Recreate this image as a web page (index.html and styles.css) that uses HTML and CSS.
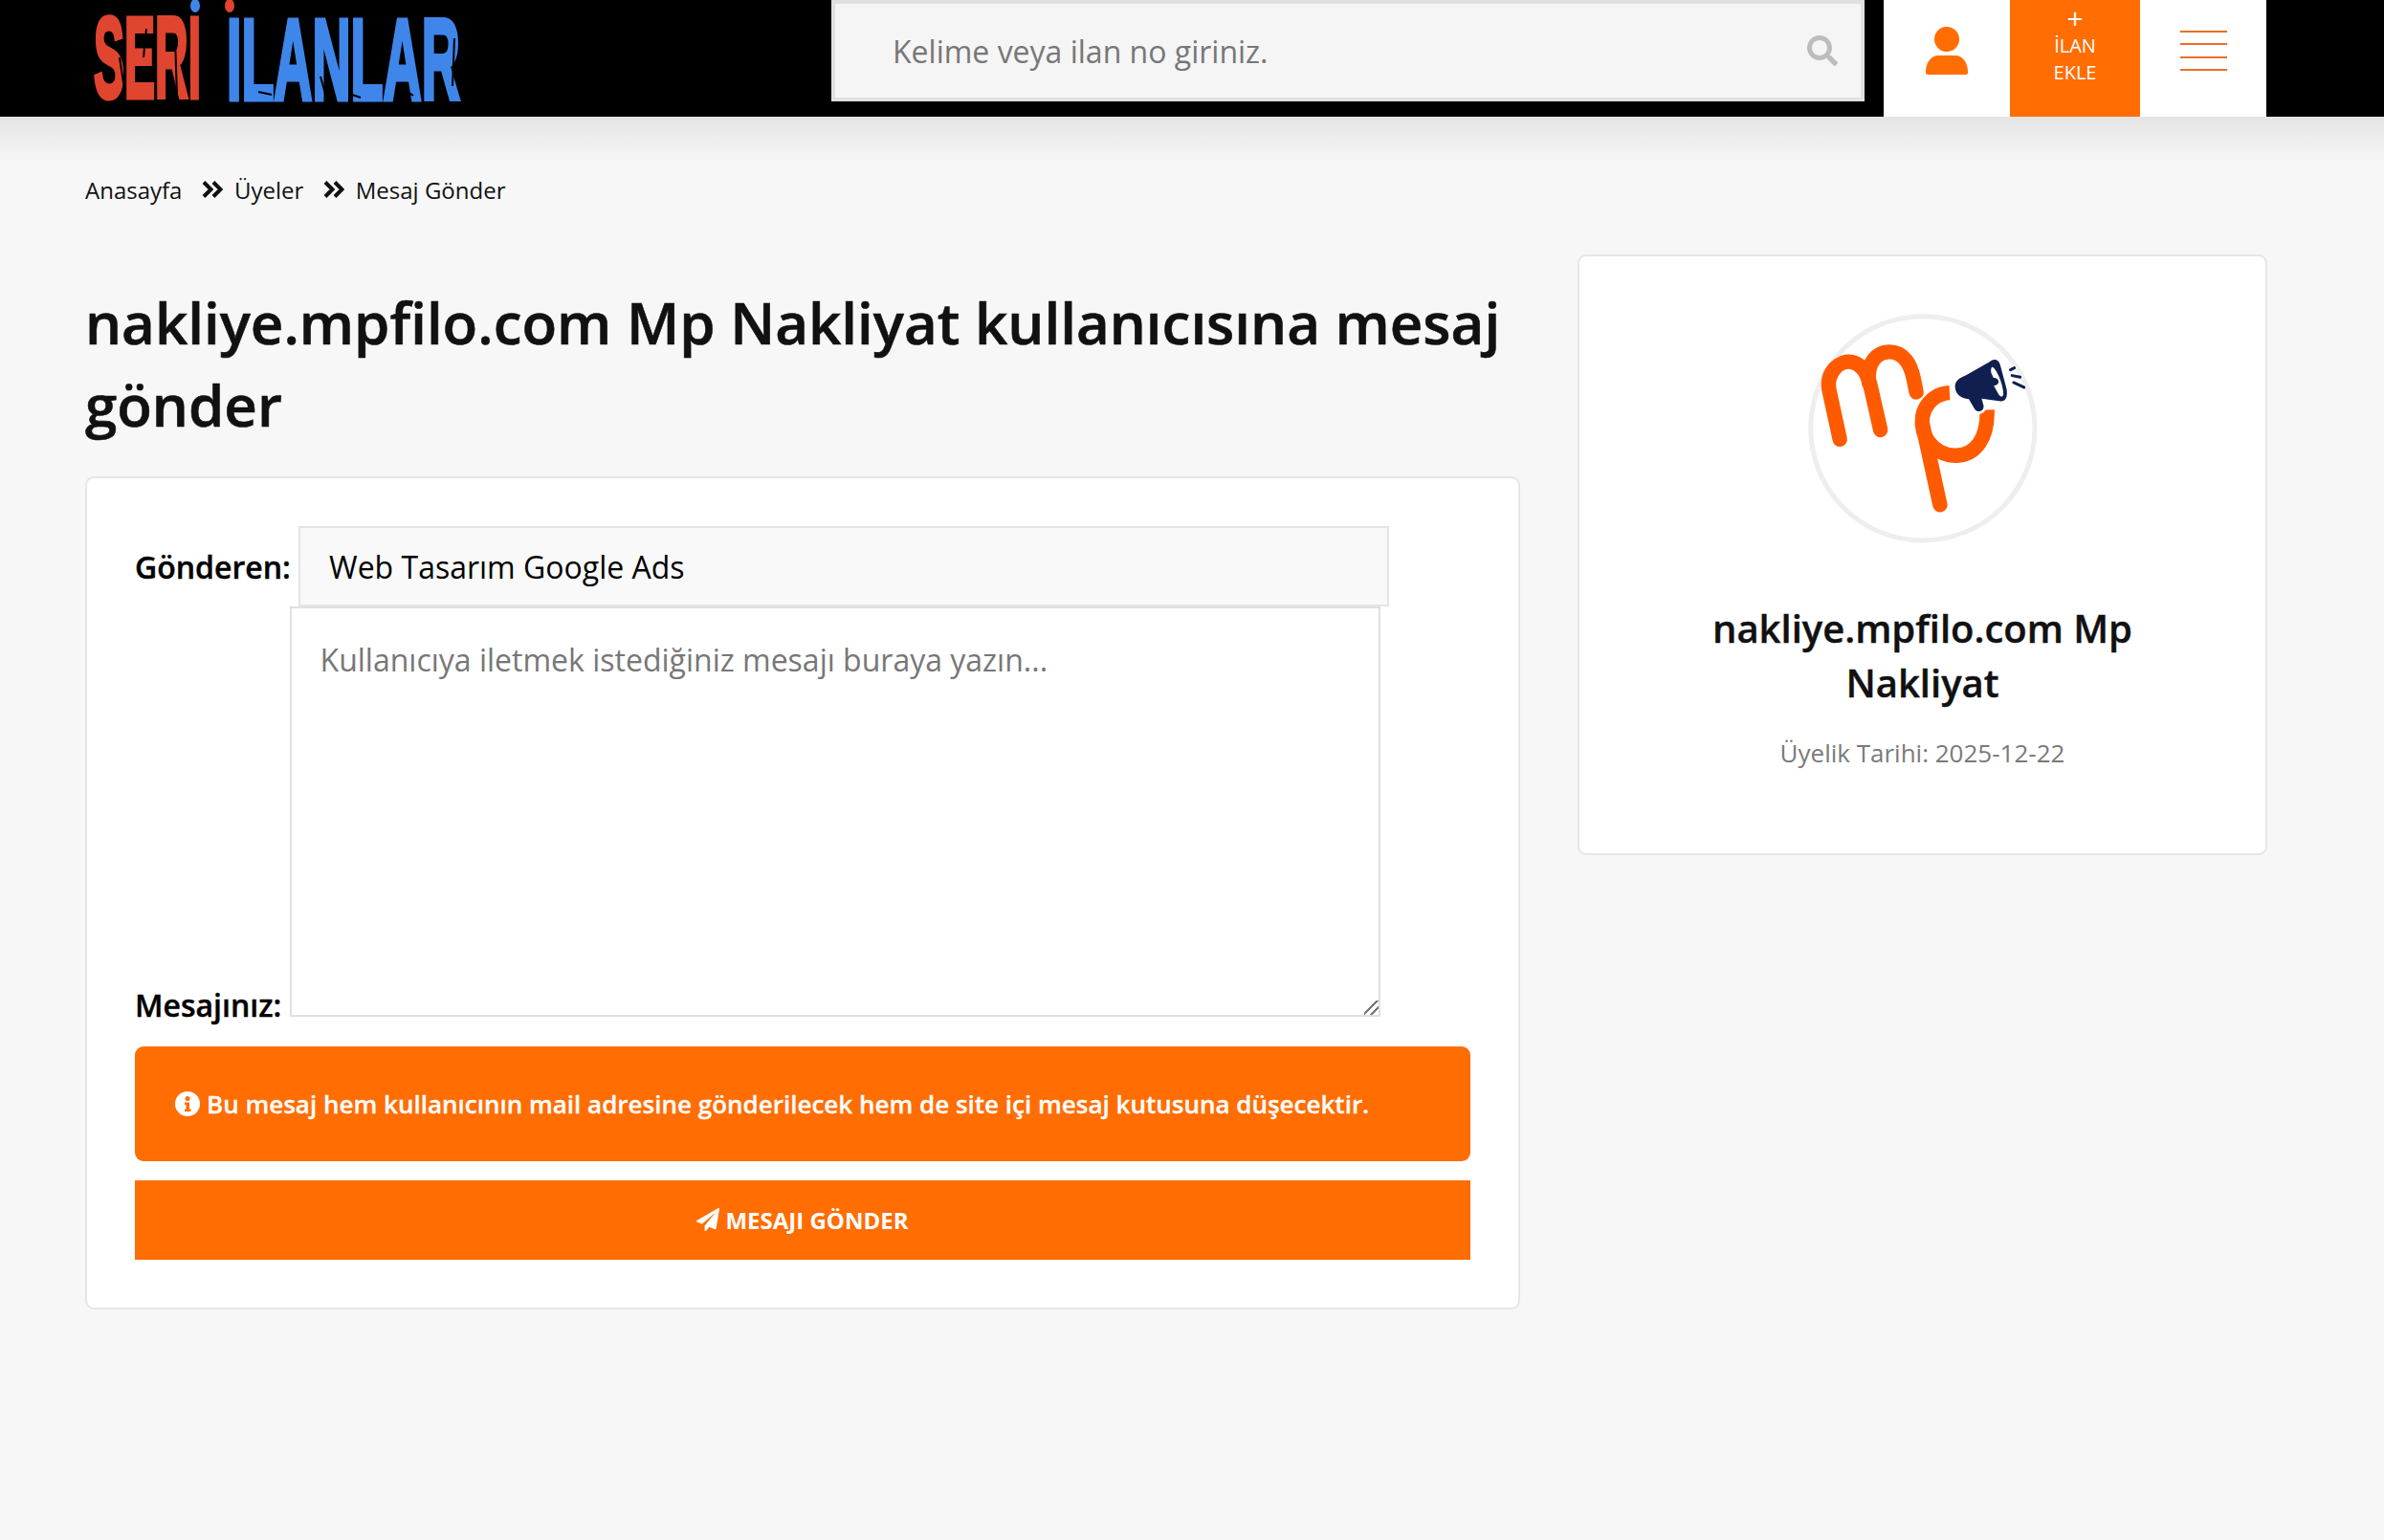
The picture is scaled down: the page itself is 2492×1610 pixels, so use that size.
FILE: index.html
```html
<!DOCTYPE html>
<html lang="tr">
<head>
    <meta charset="UTF-8">
    <title>Mesaj Gönder - Seri İlanlar</title>
    <link rel="stylesheet" href="styles.css">
</head>
<body>
<header class="topbar">
    <a class="logo" href="#" aria-label="Seri İlanlar">
        <svg width="400" height="122" viewBox="0 0 400 122">
            <text class="logo-red" transform="translate(3 102) scale(.4 1)">SERI</text>
            <text class="logo-blue" transform="translate(142 104) scale(.463 1)">ILANLAR</text>
            <ellipse cx="109" cy="6" rx="5" ry="7" fill="#3f86ea"/>
            <ellipse cx="145" cy="6" rx="5" ry="7" fill="#e0452f"/>
            <path class="logo-scratch" d="M30 60l6 40M58 30l-3 30M175 96l14 3M270 98l12 4M325 92l12 8M380 40l-2 50M240 80l5 18M88 40l2 60"/>
        </svg>
    </a>
    <form class="search">
        <input type="text" placeholder="Kelime veya ilan no giriniz.">
        <svg class="search-icon" width="32" height="32" viewBox="0 0 512 512">
            <path d="M505 442.7L405.3 343c-4.500-4.500-10.600-7-17-7H372c27.600-35.300 44-79.700 44-128C416 93.100 322.900 0 208 0S0 93.100 0 208s93.100 208 208 208c48.300 0 92.700-16.400 128-44v16.300c0 6.400 2.500 12.500 7 17l99.700 99.700c9.400 9.400 24.600 9.400 33.900 0l28.300-28.300c9.400-9.400 9.400-24.600.100-34zM208 336c-70.700 0-128-57.200-128-128 0-70.700 57.200-128 128-128 70.700 0 128 57.200 128 128 0 70.700-57.200 128-128 128z"/>
        </svg>
    </form>
    <nav class="actions">
        <a class="action" href="#">
            <svg width="44" height="50" viewBox="0 0 44 50">
                <circle cx="22" cy="13" r="13"/>
                <path d="M13 30h18c7 0 13 7 13 17v1c0 1-1 2-2 2H2c-1 0-2-1-2-2v-1c0-10 6-17 13-17z"/>
            </svg>
        </a>
        <a class="action action-add" href="#">
            <span class="plus">+</span>
            <span>İLAN</span>
            <span>EKLE</span>
        </a>
        <a class="action" href="#">
            <span class="burger"><i></i><i></i><i></i><i></i></span>
        </a>
    </nav>
</header>

<div class="page">
    <div class="breadcrumb">
        <a href="#">Anasayfa</a>
        <svg class="crumb-sep" width="22" height="18" viewBox="0 0 22 18"><path d="M2 1.500l7.500 7.500-7.500 7.500M12 1.500l7.500 7.500-7.500 7.500"/></svg>
        <a href="#">Üyeler</a>
        <svg class="crumb-sep" width="22" height="18" viewBox="0 0 22 18"><path d="M2 1.500l7.500 7.500-7.500 7.500M12 1.500l7.500 7.500-7.500 7.500"/></svg>
        <a href="#">Mesaj Gönder</a>
    </div>

    <div class="columns">
        <main class="main-col">
            <h1>nakliye.mpfilo.com Mp Nakliyat kullanıcısına mesaj gönder</h1>
            <form class="card message-form">
                <label>Gönderen:</label>
                <input type="text" class="sender" value="Web Tasarım Google Ads">
                <label>Mesajınız:</label>
                <textarea placeholder="Kullanıcıya iletmek istediğiniz mesajı buraya yazın..."></textarea>
                <div class="notice">
                    <svg width="26" height="26" viewBox="0 0 26 26">
                        <circle cx="13" cy="13" r="13" fill="#fff"/>
                        <circle cx="13" cy="7.500" r="2.500" fill="#ff6d03"/>
                        <path d="M10 11.500h5v7h1.500v2.500h-6.500v-2.500h1.500v-4.500h-1.500z" fill="#ff6d03"/>
                    </svg>
                    <span>Bu mesaj hem kullanıcının mail adresine gönderilecek hem de site içi mesaj kutusuna düşecektir.</span>
                </div>
                <button type="submit" class="send-btn">
                    <svg width="24" height="24" viewBox="0 0 1792 1792">
                        <path d="M1764 11q33 24 27 64l-256 1536q-5 29-32 45-14 8-31 8-11 0-24-5l-453-185-242 295q-18 23-49 23-13 0-22-4-19-7-30.500-23.500t-11.500-36.500v-349l864-1059-1069 925-395-162q-37-14-40-55-2-40 32-59l1664-960q15-9 32-9 20 0 36 11z"/>
                    </svg>
                    MESAJI GÖNDER
                </button>
            </form>
        </main>

        <aside class="card profile">
            <svg class="avatar" width="240" height="240" viewBox="148 85 717 717">
                <circle cx="506" cy="443" r="350" fill="#fff" stroke="#eee" stroke-width="15"/>
                <g fill="none" stroke="#ff5a00" stroke-width="46" stroke-linecap="round">
                    <path d="M247 477L213 320C205 265 250 228 285 236C320 244 335 275 345 320L374 448"/>
                    <path d="M338 300C330 235 365 205 400 204C445 203 468 240 478 290L486 330"/>
                    <path d="M505 430L560 682"/>
                </g>
                <path fill="none" stroke="#ff5a00" stroke-width="46" d="M590 332C535 335 500 380 505 432C510 490 560 530 612 528C670 526 710 475 707 385"/>
                <path fill="#0f1f50" stroke="#fff" stroke-width="16" paint-order="stroke" stroke-linejoin="round" d="M640 278L715 235C728 225 742 226 748 245L768 320C772 345 765 358 750 358L690 350L696 372C698 392 676 395 668 382L650 352C625 350 606 335 607 310C608 295 622 285 640 278z"/>
                <path fill="#fff" d="M725 252C740 262 758 310 758 335C756 348 748 345 742 335L728 310C748 308 748 285 727 285L720 270C718 258 720 250 725 252z"/>
                <path fill="none" stroke="#0f1f50" stroke-width="9" stroke-linecap="round" d="M780 260l12-6M785 278l25 5M790 300l32 15"/>
            </svg>
            <h2>nakliye.mpfilo.com Mp Nakliyat</h2>
            <p>Üyelik Tarihi: 2025-12-22</p>
        </aside>
    </div>
</div>
</body>
</html>
```
FILE: styles.css
```css
* {
    box-sizing: border-box;
}

body {
    margin: 0;
    min-height: 1610px;
    font-family: "Open Sans", sans-serif;
    color: #111;
    background: linear-gradient(#e4e4e4, #f7f7f7 48px) 0 122px no-repeat;
    background-color: #f7f7f7;
}

a {
    color: inherit;
    text-decoration: none;
}

/* header */
.topbar {
    display: flex;
    height: 122px;
    padding: 0 122px 0 95px;
    background: #000;
}

.logo {
    width: 774px;
    height: 122px;
}

.logo svg {
    display: block;
}

.logo text {
    font-family: "Liberation Sans", sans-serif;
    font-weight: 700;
    font-size: 120px;
    stroke-width: 5;
}

.logo-red {
    fill: #e0452f;
    stroke: #e0452f;
}

.logo-blue {
    fill: #3f86ea;
    stroke: #3f86ea;
}

.logo-scratch {
    fill: none;
    stroke: #000;
    stroke-width: 2;
}

.search {
    display: flex;
    align-items: center;
    width: 1080px;
    height: 106px;
    padding: 0 24px 0 58px;
    background: #f5f5f5;
    border: 4px solid #e0e0e0;
}

.search input {
    flex: 1;
    border: none;
    outline: none;
    background: none;
    font: 32px "Open Sans", sans-serif;
}

.search input::placeholder {
    color: #777;
    opacity: 1;
}

.search-icon {
    fill: #bdbdbd;
}

.actions {
    display: flex;
    margin-left: 20px;
    background: #fff;
}

.action {
    display: flex;
    flex-direction: column;
    align-items: center;
    justify-content: center;
    width: 132px;
    padding-bottom: 16px;
    color: #ff6d03;
}

.action svg {
    fill: #ff6d03;
}

.action-add {
    width: 136px;
    padding-bottom: 28px;
    background: #ff6d03;
    color: #fff;
    font-size: 20px;
    line-height: 28px;
}

.plus {
    font-size: 30px;
    line-height: 30px;
}

.burger {
    display: flex;
    flex-direction: column;
    gap: 11.300px;
    width: 49px;
}

.burger i {
    height: 2px;
    background: #e8702a;
}

/* page */
.page {
    padding: 0 122px 0 89px;
}

.breadcrumb {
    display: flex;
    align-items: center;
    height: 98px;
    padding-top: 54px;
    font-size: 24px;
    color: #111;
}

.crumb-sep {
    margin: 0 11.500px 0 21px;
    fill: none;
    stroke: #111;
    stroke-width: 4;
}

.columns {
    display: flex;
    justify-content: space-between;
    align-items: flex-start;
    margin-top: 46px;
}

.main-col {
    width: 1500px;
}

h1 {
    margin: 28px 0 32px;
    font-size: 60px;
    font-weight: 600;
    line-height: 86px;
    color: #111;
    -webkit-text-stroke: 0.6px #111;
}

.card {
    background: #fff;
    border: 2px solid #e6e6e6;
    border-radius: 9px;
}

/* message form */
.message-form {
    padding: 50px;
    font-size: 32px;
    line-height: 42px;
}

.message-form label {
    font-weight: 600;
    color: #000;
    -webkit-text-stroke: 0.4px #000;
}

.sender {
    width: 1140px;
    height: 84px;
    padding: 0 30px;
    background: #f9f9f9;
    border: 2px solid #e4e4e4;
    font: 32px "Open Sans", sans-serif;
    color: #000;
    outline: none;
}

textarea {
    width: 1140px;
    height: 429px;
    padding: 30px 30px;
    border: 2px solid #e0e0e0;
    background: #fff;
    font: 32px/1.5 "Open Sans", sans-serif;
    outline: none;
}

textarea::placeholder {
    color: #777;
    opacity: 1;
}

textarea::-webkit-resizer {
    background: linear-gradient(135deg, transparent 42%, #777 42%, #777 52%, transparent 52%, transparent 68%, #777 68%, #777 78%, transparent 78%);
}

.notice {
    display: flex;
    align-items: center;
    gap: 7px;
    height: 120px;
    margin-top: 22px;
    padding: 0 42px;
    background: #ff6d03;
    border-radius: 9px;
    color: #fff;
    font-size: 26px;
    font-weight: 600;
    -webkit-text-stroke: 0.3px #fff;
}

.send-btn {
    display: flex;
    align-items: center;
    justify-content: center;
    gap: 6px;
    width: 100%;
    height: 83px;
    margin-top: 20px;
    padding-bottom: 2px;
    border: none;
    background: #ff6d03;
    color: #fff;
    font: 700 24px "Open Sans", sans-serif;
    cursor: pointer;
}

.send-btn svg {
    fill: #fff;
}

/* profile card */
.profile {
    width: 721px;
    height: 628px;
    padding: 60px 60px 0;
    text-align: center;
}

.avatar {
    display: block;
    margin: 0 auto;
}

.profile h2 {
    margin: 60px 0 0;
    font-size: 40px;
    font-weight: 600;
    line-height: 57px;
    color: #111;
    -webkit-text-stroke: 0.4px #111;
}

.profile p {
    margin: 25px 0 0;
    font-size: 26px;
    line-height: 40px;
    color: #7a7a7a;
}
```
